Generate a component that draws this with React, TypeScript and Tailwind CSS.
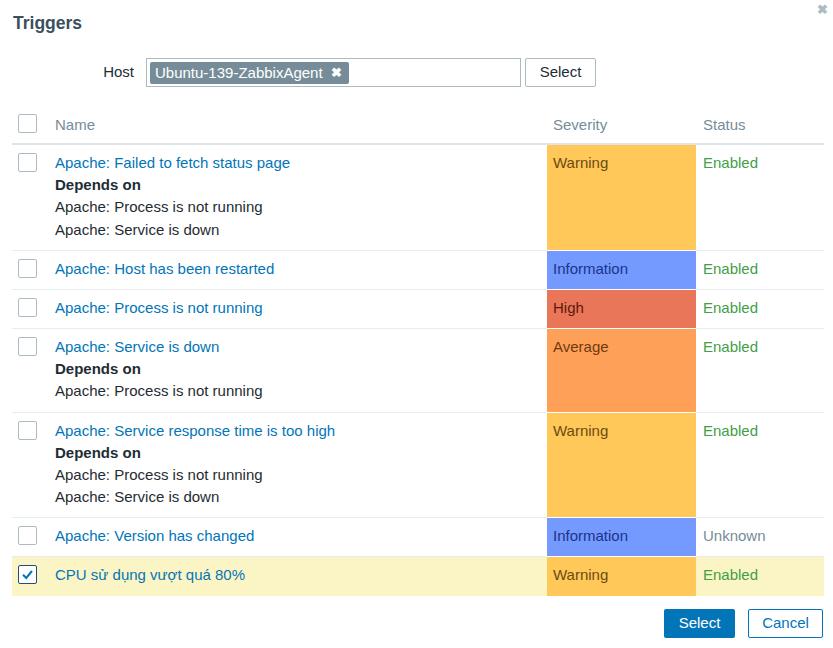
import { Fragment } from "react";

type Sev = "Warning" | "Information" | "High" | "Average";

const sevClass: Record<Sev, string> = {
  Warning: "bg-[#ffc859] text-[#6b4b10]",
  Information: "bg-[#7499ff] text-[#1b348a]",
  High: "bg-[#e97659] text-[#5a1a0c]",
  Average: "bg-[#ffa059] text-[#6e3a10]",
};

type Trigger = {
  name: string;
  depends?: string[];
  severity: Sev;
  status: "Enabled" | "Unknown";
  checked?: boolean;
};

const triggers: Trigger[] = [
  {
    name: "Apache: Failed to fetch status page",
    depends: ["Apache: Process is not running", "Apache: Service is down"],
    severity: "Warning",
    status: "Enabled",
  },
  { name: "Apache: Host has been restarted", severity: "Information", status: "Enabled" },
  { name: "Apache: Process is not running", severity: "High", status: "Enabled" },
  {
    name: "Apache: Service is down",
    depends: ["Apache: Process is not running"],
    severity: "Average",
    status: "Enabled",
  },
  {
    name: "Apache: Service response time is too high",
    depends: ["Apache: Process is not running", "Apache: Service is down"],
    severity: "Warning",
    status: "Enabled",
  },
  { name: "Apache: Version has changed", severity: "Information", status: "Unknown" },
  { name: "CPU sử dụng vượt quá 80%", severity: "Warning", status: "Enabled", checked: true },
];

const Checkbox = ({ checked }: { checked?: boolean }) => (
  <span
    className={
      "flex w-[19px] h-[19px] items-center justify-center rounded-[2px] bg-white border " +
      (checked ? "border-[#1f4e7a]" : "border-[#acbbc2]")
    }
  >
    {checked && (
      <svg width="13" height="13" viewBox="0 0 13 13" fill="none">
        <path d="M2 6.8 L5.2 10 L11 3" stroke="#0275b8" strokeWidth="2" />
      </svg>
    )}
  </span>
);

export default function App() {
  return (
    <div className="relative w-[833px] h-[648px] bg-white text-[15px] text-[#1f2c33] font-['Liberation_Sans',Arial,sans-serif]">
      <button className="absolute right-[5px] top-[3px] text-[#acbbc2] text-[13px] font-bold leading-none">
        ✖
      </button>

      <h1 className="pl-[13px] pt-[12px] text-[17.5px] leading-[22px] font-bold text-[#3b4f5e]">Triggers</h1>

      <div className="flex items-center mt-[24px]">
        <label className="w-[134px] text-right pr-0 text-[#1f2c33]">Host</label>
        <div className="ml-[12px] w-[375px] h-[29px] border border-[#acbbc2] bg-white flex items-center px-[3px]">
          <span className="flex items-center h-[22px] rounded-[2px] bg-[#768d99] text-white pl-[5px] pr-[7px] leading-[22px]">
            Ubuntu-139-ZabbixAgent
            <span className="ml-[8px] text-[13px] font-bold">✖</span>
          </span>
        </div>
        <button className="ml-[4px] w-[71px] h-[29px] border border-[#acbbc2] rounded-[2px] bg-white text-[#1f2c33]">
          Select
        </button>
      </div>

      <table className="mx-[12px] mt-[20px] w-[812px] border-separate border-spacing-0 leading-[22.15px]">
        <thead>
          <tr className="text-[#768d99]">
            <th className="w-[36px] pl-[6px] py-[7px] border-b-2 border-[#dfe4e7] text-left font-normal align-top">
              <Checkbox />
            </th>
            <th className="w-[499px] pl-[7px] py-[7px] border-b-2 border-[#dfe4e7] text-left font-normal">Name</th>
            <th className="w-[149px] pl-[6px] py-[7px] border-b-2 border-[#dfe4e7] text-left font-normal">
              Severity
            </th>
            <th className="pl-[7px] py-[7px] border-b-2 border-[#dfe4e7] text-left font-normal">Status</th>
          </tr>
        </thead>
        <tbody>
          {triggers.map((t, i) => {
            const last = i === triggers.length - 1;
            const b = last ? "" : "border-b border-[#e8ecee]";
            return (
              <tr key={t.name} className={t.checked ? "bg-[#fbf5c5]" : ""}>
                <td className={"pl-[6px] pt-[8px] pb-[8px] align-top " + b}>
                  <Checkbox checked={t.checked} />
                </td>
                <td className={"pl-[7px] pt-[7px] pb-[9px] align-top " + b}>
                  <a className="text-[#0275b8]">{t.name}</a>
                  {t.depends && (
                    <Fragment>
                      <div className="font-bold">Depends on</div>
                      {t.depends.map((d) => (
                        <div key={d}>{d}</div>
                      ))}
                    </Fragment>
                  )}
                </td>
                <td
                  className={
                    "pl-[6px] pt-[7px] pb-[9px] align-top " +
                    sevClass[t.severity] +
                    (last ? "" : " border-b border-white")
                  }
                >
                  {t.severity}
                </td>
                <td
                  className={
                    "pl-[7px] pt-[7px] pb-[9px] align-top " +
                    b +
                    (t.status === "Enabled" ? " text-[#429e47]" : " text-[#768d99]")
                  }
                >
                  {t.status}
                </td>
              </tr>
            );
          })}
        </tbody>
      </table>

      <div className="flex justify-end gap-[13px] pr-[10px] mt-[13px]">
        <button className="w-[71px] h-[29px] rounded-[2px] bg-[#0275b8] text-white">Select</button>
        <button className="w-[75px] h-[29px] rounded-[2px] border border-[#0275b8] text-[#0275b8] bg-white">
          Cancel
        </button>
      </div>
    </div>
  );
}
